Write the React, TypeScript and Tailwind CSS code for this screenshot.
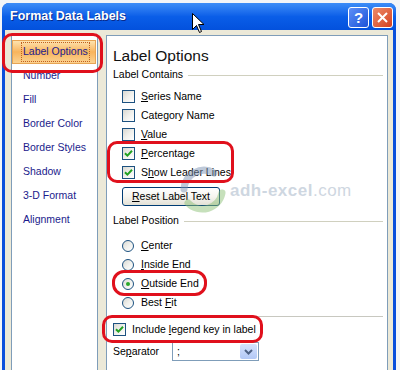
import React from "react";

function Check({ checked }: { checked?: boolean }) {
  return (
    <span className="w-[13px] h-[13px] shrink-0 border border-[#1c5180] bg-linear-to-br from-[#d8d8d2] via-[#f0f0ec] to-white flex items-center justify-center">
      {checked && (
        <svg width="9" height="9" viewBox="0 0 9 9">
          <path d="M1 4.2 L3.4 6.6 L8 1.8" fill="none" stroke="#21a121" strokeWidth="2" />
        </svg>
      )}
    </span>
  );
}

function Radio({ checked }: { checked?: boolean }) {
  return (
    <span className="w-[12px] h-[12px] shrink-0 rounded-full border border-[#1c5180] bg-linear-to-br from-[#d8d8d2] via-[#f0f0ec] to-white flex items-center justify-center">
      {checked && <span className="w-[4px] h-[4px] rounded-full bg-[#2aa82a]" />}
    </span>
  );
}

function Mn({ pre = "", u, post = "" }: { pre?: string; u: string; post?: string }) {
  return (
    <span className="whitespace-pre">
      {pre}
      <span className="underline underline-offset-[1px]">{u}</span>
      {post}
    </span>
  );
}

const navItems = ["Number", "Fill", "Border Color", "Border Styles", "Shadow", "3-D Format", "Alignment"];

export default function App() {
  return (
    <div className="relative w-[400px] h-[370px] overflow-hidden bg-[#f3f5f8] font-['Liberation_Sans',Arial,sans-serif]">
      <div className="ml-[2px] mt-[3px] w-[394px] h-[367px] flex flex-col rounded-t-[7px] bg-[#0a4fdc] overflow-hidden">
        {/* title bar */}
        <div className="h-[27px] shrink-0 flex items-center pl-[8px] pr-[3px] bg-linear-to-b from-[#3d8df7] via-[#0a5ee8] to-[#0351dd]">
          <span className="text-white font-bold text-[12.5px] [text-shadow:1px_1px_0_#0a2a8a]">Format Data Labels</span>
          <div className="ml-auto flex gap-[3px] pt-[2px]">
            <div className="w-[21px] h-[21px] rounded-[3px] border border-white bg-linear-to-br from-[#5d8ff7] to-[#1c52d8] flex items-center justify-center text-white font-bold text-[15px] leading-none">
              ?
            </div>
            <div className="w-[21px] h-[21px] rounded-[3px] border border-white bg-linear-to-br from-[#ec8a68] to-[#d43e1c] flex items-center justify-center">
              <svg width="11" height="11" viewBox="0 0 11 11">
                <path d="M1 1 L10 10 M10 1 L1 10" stroke="white" strokeWidth="2" />
              </svg>
            </div>
          </div>
        </div>

        {/* body */}
        <div className="flex-1 mx-[3px] flex bg-[#ece9d8] pl-[6px] pt-[5px] gap-[8px]">
          {/* nav */}
          <div className="w-[87px] h-[400px] shrink-0 bg-white border border-[#7f9db9] pt-[4px] text-[10.5px] text-[#1b1b8c]">
            <div className="h-[24px] mr-[1px] flex items-center pl-[10px] border border-[#e7a454] bg-linear-to-b from-[#fde3ae] via-[#f8b45c] to-[#fbd391]">
              <span className="outline-1 outline-dotted outline-[#c06020] outline-offset-[1px]">Label Options</span>
            </div>
            {navItems.map((n) => (
              <div key={n} className="h-[24px] flex items-center pl-[11px]">
                {n}
              </div>
            ))}
          </div>

          {/* content */}
          <div className="w-[282px] h-[400px] shrink-0 bg-white border border-[#7f9db9] pl-[6px] pr-[4px] pt-[10px] text-[10.5px] text-black">
            <div className="h-[20px] leading-[20px] text-[15.5px] text-[#111]">Label Options</div>
            <div className="mt-[2px] h-[14px] flex items-center gap-[5px]">
              <span>Label Contains</span>
              <div className="flex-1 h-px bg-[#d0d0bf]" />
            </div>
            <div className="mt-[5px] pl-[9px] flex flex-col">
              <div className="h-[19px] flex items-center gap-[6px]">
                <Check />
                <Mn u="S" post="eries Name" />
              </div>
              <div className="h-[19px] flex items-center gap-[6px]">
                <Check />
                <Mn pre="Cate" u="g" post="ory Name" />
              </div>
              <div className="h-[19px] flex items-center gap-[6px]">
                <Check />
                <Mn u="V" post="alue" />
              </div>
              <div className="h-[19px] flex items-center gap-[6px]">
                <Check checked />
                <Mn u="P" post="ercentage" />
              </div>
              <div className="h-[19px] flex items-center gap-[6px]">
                <Check checked />
                <Mn pre="S" u="h" post="ow Leader Lines" />
              </div>
            </div>
            <div className="mt-[5px] ml-[9px] w-[98px] h-[19px] rounded-[3px] border border-[#003c74] bg-linear-to-b from-white via-[#f6f5f0] to-[#e3e1d6] flex items-center justify-center">
              <Mn u="R" post="eset Label Text" />
            </div>
            <div className="mt-[8px] h-[14px] flex items-center gap-[5px]">
              <span>Label Position</span>
              <div className="flex-1 h-px bg-[#d0d0bf]" />
            </div>
            <div className="mt-[8px] pl-[9px] flex flex-col">
              <div className="h-[19px] flex items-center gap-[7px]">
                <Radio />
                <Mn u="C" post="enter" />
              </div>
              <div className="h-[19px] flex items-center gap-[7px]">
                <Radio />
                <Mn u="I" post="nside End" />
              </div>
              <div className="h-[19px] flex items-center gap-[7px]">
                <Radio checked />
                <Mn u="O" post="utside End" />
              </div>
              <div className="h-[19px] flex items-center gap-[7px]">
                <Radio />
                <Mn pre="Best " u="F" post="it" />
              </div>
            </div>
            <div className="mt-[4px] -ml-[6px] h-px bg-[#c8c8c0]" />
            <div className="mt-[3px] h-[19px] flex items-center gap-[6px]">
              <Check checked />
              <Mn pre="Include " u="l" post="egend key in label" />
            </div>
            <div className="mt-[3px] h-[19px] flex items-center">
              <span className="w-[59px]">
                <Mn pre="Se" u="p" post="arator" />
              </span>
              <div className="w-[87px] h-[19px] border border-[#7f9db9] bg-white flex items-center">
                <span className="pl-[4px]">;</span>
                <div className="ml-auto mr-px w-[17px] h-[15px] rounded-[2px] bg-linear-to-b from-[#d6e2fd] to-[#b2c8f6] flex items-center justify-center">
                  <svg width="9" height="6" viewBox="0 0 9 6">
                    <path d="M1 1 L4.5 4.5 L8 1" fill="none" stroke="#4d6185" strokeWidth="2" />
                  </svg>
                </div>
              </div>
            </div>
          </div>
        </div>
      </div>

      {/* watermark */}
      <div className="absolute left-[176px] top-[165px] flex items-center opacity-50 pointer-events-none">
        <svg width="52" height="52" viewBox="0 0 52 52">
          <path d="M38 8 A20 20 0 0 0 8 24" fill="none" stroke="#7f95b4" strokeWidth="7" strokeLinecap="round" />
          <path d="M12 38 A20 20 0 0 0 46 28" fill="none" stroke="#8fc27a" strokeWidth="7" strokeLinecap="round" />
        </svg>
        <span className="ml-[2px] text-[17px] font-bold text-[#9fb0c4] tracking-[0.5px]">
          adh-excel<span className="font-normal">.com</span>
        </span>
      </div>

      {/* annotations */}
      <div className="absolute left-[2px] top-[33px] w-[101px] h-[40px] rounded-[10px] border-[3px] border-[#e0101c]" />
      <div className="absolute left-[107px] top-[141px] w-[127px] h-[42px] rounded-[10px] border-[3px] border-[#e0101c]" />
      <div className="absolute left-[112px] top-[270px] w-[95px] h-[26px] rounded-[12px] border-[3px] border-[#e0101c]" />
      <div className="absolute left-[102px] top-[315px] w-[161px] h-[28px] rounded-[10px] border-[3px] border-[#e0101c]" />

      {/* cursor */}
      <svg className="absolute left-[192px] top-[13px]" width="13" height="21" viewBox="0 0 13 21">
        <path d="M0.5 0.5 L0.5 16.5 L4.5 12.5 L7.5 19.5 L9.5 18.5 L6.5 11.5 L12 11.5 Z" fill="white" stroke="black" strokeWidth="1" />
      </svg>
    </div>
  );
}
